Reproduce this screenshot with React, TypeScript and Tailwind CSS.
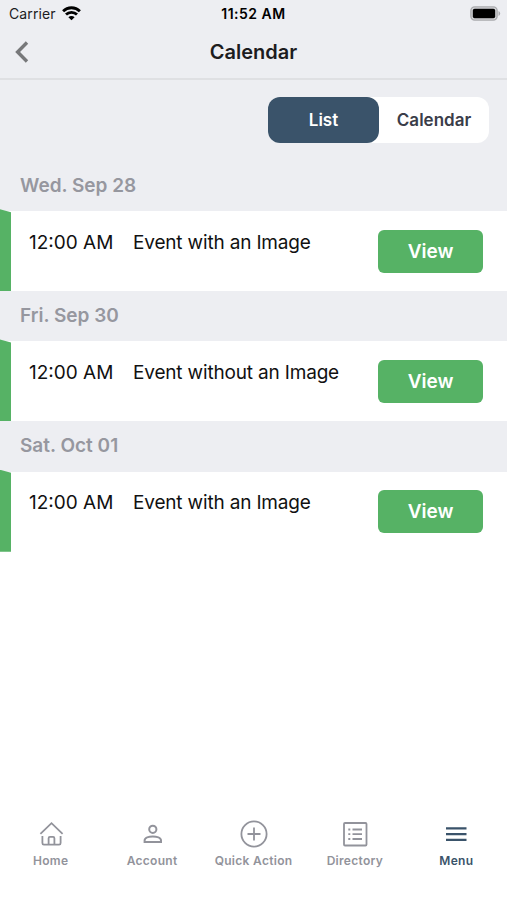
import type { ReactNode } from "react";
import clsx from "clsx";

const events = [
  { date: "Wed. Sep 28", time: "12:00 AM", title: "Event with an Image" },
  { date: "Fri. Sep 30", time: "12:00 AM", title: "Event without an Image" },
  { date: "Sat. Oct 01", time: "12:00 AM", title: "Event with an Image" },
];

function StatusBar() {
  return (
    <div className="grid h-[27px] grid-cols-3 items-center text-[14px] text-[#1c1c1e]">
      <div className="flex items-center gap-[6px] pl-[9px]">
        <span className="tracking-[0.1px]">Carrier</span>
        <svg width="19" height="15" viewBox="0 0 19 15" fill="none" stroke="#000" strokeWidth="2.8">
          <path d="M1.1 5.2a12 12 0 0 1 16.8 0" />
          <path d="M4 8.6a7.8 7.8 0 0 1 11 0" />
          <path d="M9.5 14.3 6.4 11.2a4.4 4.4 0 0 1 6.2 0z" fill="#000" stroke="none" />
        </svg>
      </div>
      <span className="text-center font-semibold tracking-[0.5px] whitespace-nowrap text-black">11:52 AM</span>
      <div className="flex justify-end pr-[6px]">
        <svg width="31" height="15" viewBox="0 0 31 15">
          <rect x="0.9" y="0.9" width="26.2" height="13.2" rx="3.8" fill="#d4d5d8" stroke="#a9aaad" strokeWidth="1.4" />
          <rect x="2.8" y="2.8" width="22.4" height="9.4" rx="1.8" fill="#000" />
          <path d="M28.5 5a2.7 2.7 0 0 1 0 5z" fill="#a9aaad" />
        </svg>
      </div>
    </div>
  );
}

function Header() {
  return (
    <header className="grid h-[53px] grid-cols-3 items-center border-b-2 border-[#dfe0e3] pb-px">
      <button className="pl-[15px]" aria-label="Back">
        <svg width="14" height="22" viewBox="0 0 14 22" fill="none" stroke="#77787a" strokeWidth="3.4">
          <path d="M12 1.5 2.6 11 12 20.5" />
        </svg>
      </button>
      <h1 className="text-center text-[20px] font-semibold text-[#1c1c1e]">Calendar</h1>
    </header>
  );
}

function ViewToggle() {
  return (
    <div className="flex justify-end pt-[17px] pr-[18px]">
      <div className="flex h-[46px] w-[221px] rounded-[12px] bg-white text-[17px] font-semibold">
        <button className="w-[111px] rounded-[12px] bg-[#3a536a] pt-px text-white">List</button>
        <button className="w-[110px] pt-px text-[#3a3d49]">Calendar</button>
      </div>
    </div>
  );
}

function EventRow({ time, title }: { time: string; title: string }) {
  return (
    <div className="relative flex h-[80px] items-start bg-white pl-[29px] text-[19px] text-[#111]">
      <span className="absolute top-[-2px] bottom-0 left-0 w-[11px] bg-[#56b265] [clip-path:polygon(0_0,100%_3px,100%_100%,0_100%)]" />
      <span className="w-[104px] pt-[17.6px] leading-[28px] whitespace-nowrap">{time}</span>
      <span className="flex-1 pt-[17.6px] leading-[28px] tracking-[-0.17px] whitespace-nowrap">{title}</span>
      <button className="mt-[18.7px] mr-[24px] h-[43px] w-[105px] rounded-[6px] bg-[#56b265] pt-px font-semibold text-white">
        View
      </button>
    </div>
  );
}

function Tab({ label, active, children }: { label: string; active?: boolean; children: ReactNode }) {
  return (
    <button className={clsx("flex flex-1 flex-col items-center", active ? "text-[#3a536a]" : "text-[#92939b]")}>
      <svg width="30" height="30" viewBox="0 0 30 30" fill="none" stroke="currentColor" strokeWidth="1.8">
        {children}
      </svg>
      <span className="mt-[3px] text-[12px] leading-[18px] font-semibold tracking-[0.3px] whitespace-nowrap">{label}</span>
    </button>
  );
}

function TabBar() {
  return (
    <nav className="flex h-[81px]">
      <Tab label="Home">
        <path d="M4.4 14.8 15.5 4.2 26.6 14.8" />
        <path d="M6.4 17v7c0 1 .5 1.6 1.5 1.6h15.2c1 0 1.5-.6 1.5-1.6v-7M12.6 25.6v-6.4c0-.9.4-1.3 1.3-1.3h3.2c.9 0 1.3.4 1.3 1.3v6.4" />
      </Tab>
      <Tab label="Account">
        <g strokeWidth="2">
          <circle cx="15.8" cy="10.3" r="3.6" />
          <path d="M7.6 23v-1.6c0-2.8 4.4-4 8.2-4s8.2 1.2 8.2 4V23z" />
        </g>
      </Tab>
      <Tab label="Quick Action">
        <circle cx="15" cy="15" r="12.6" />
        <path d="M15 8.5v13M8.5 15h13" />
      </Tab>
      <Tab label="Directory">
        <rect x="4" y="4" width="22.5" height="22.5" rx="1" />
        <path d="M12.5 10.5h9.5M12.5 15.2h9.5M12.5 20h9.5M8.3 10.5h2M8.3 15.2h2M8.3 20h2" />
      </Tab>
      <Tab label="Menu" active>
        <path d="M5 9.3h20.5M5 15.1h20.5M5 20.9h20.5" strokeWidth="2.2" />
      </Tab>
    </nav>
  );
}

export default function App() {
  return (
    <div className="flex h-[900px] w-[507px] flex-col overflow-hidden bg-white font-['Inter',sans-serif]">
      <div className="h-[160.9px] bg-[#edeef2]">
        <StatusBar />
        <Header />
        <ViewToggle />
      </div>
      <main className="flex-1">
        {events.map((event) => (
          <section key={event.date}>
            <h2 className="flex h-[50.3px] items-center bg-[#edeef2] pl-[20px] text-[19px] font-semibold text-[#96979f]">
              {event.date}
            </h2>
            <EventRow time={event.time} title={event.title} />
          </section>
        ))}
      </main>
      <TabBar />
    </div>
  );
}
